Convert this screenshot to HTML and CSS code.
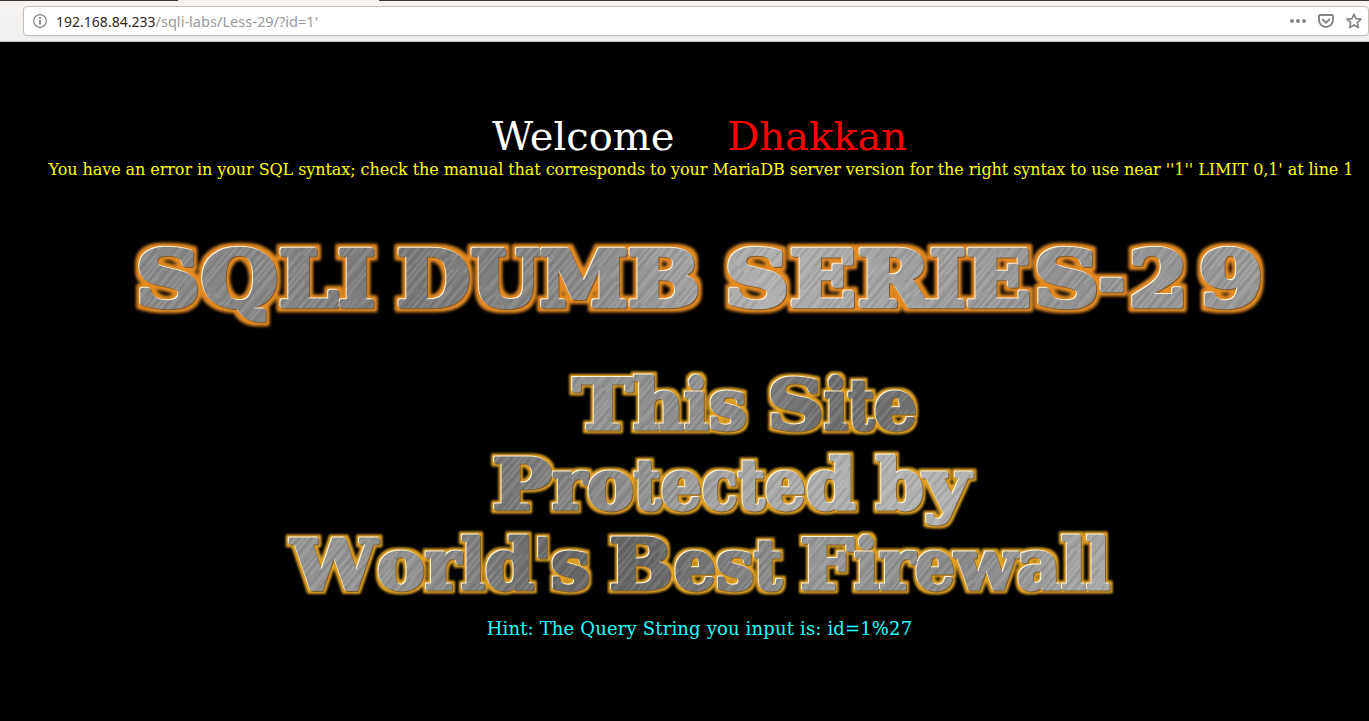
FILE: index.html
```html
<!DOCTYPE html>
<html lang="en">
<head>
<meta charset="utf-8">
<title>Less-29</title>
<link rel="stylesheet" href="styles.css">
</head>
<body>
<header class="toolbar">
  <div class="urlbar">
    <svg class="info" width="16" height="16" viewBox="0 0 16 16"><circle cx="8" cy="8" r="6.4" fill="none" stroke="#858585" stroke-width="1.2"/><path d="M8 7v4.4M8 4.3v1.8" stroke="#777" stroke-width="1.7"/></svg>
    <svg class="url" width="300" height="28"><text y="20"><tspan class="host" x="0" textLength="99.5" lengthAdjust="spacingAndGlyphs">192.168.84.233</tspan><tspan class="path" x="99.5" textLength="162.5" lengthAdjust="spacingAndGlyphs">/sqli-labs/Less-29/?id=1'</tspan></text></svg>
    <div class="actions">
      <svg width="16" height="16" viewBox="0 0 16 16" fill="#858585"><circle cx="2" cy="8" r="2"/><circle cx="8" cy="8" r="2"/><circle cx="14" cy="8" r="2"/></svg>
      <svg width="16" height="16" viewBox="0 0 16 16" fill="none" stroke="#858585" stroke-width="1.9" stroke-linecap="round" stroke-linejoin="round"><path d="M2 2h12a1 1 0 0 1 1 1v4a7 7 0 0 1-14 0V3a1 1 0 0 1 1-1zM4.7 6.5L8 9.7l3.3-3.2"/></svg>
      <svg width="16" height="16" viewBox="0 0 16 16" fill="none" stroke="#858585" stroke-width="1.7" stroke-linejoin="round"><path d="M8 1.2l2 4.5 5 .5-3.7 3.4 1 5L8 12.1l-4.3 2.5 1-5L1 6.2l5-.5z"/></svg>
    </div>
  </div>
</header>
<main class="page">
  <h1 class="welcome">Welcome&nbsp;&nbsp;&nbsp;&nbsp;<span class="name">Dhakkan</span></h1>
  <p class="error">You have an error in your SQL syntax; check the manual that corresponds to your MariaDB server version for the right syntax to use near ''1'' LIMIT 0,1' at line 1</p>
  <svg class="banner" width="1369" height="410" viewBox="0 200 1369 410">
    <defs>
      <linearGradient id="shade" x1="0" x2="1">
        <stop offset="0" stop-color="#8d8b8c"/><stop offset=".2" stop-color="#858585"/><stop offset=".3" stop-color="#787878"/><stop offset=".42" stop-color="#888"/><stop offset=".56" stop-color="#b0b0b0"/><stop offset=".66" stop-color="#a0a0a0"/><stop offset=".78" stop-color="#929292"/><stop offset="1" stop-color="#9b9b9b"/>
      </linearGradient>
      <linearGradient id="shade-low" x1="0" x2="1">
        <stop offset="0" stop-color="#949494"/><stop offset=".3" stop-color="#929292"/><stop offset=".4" stop-color="#686868"/><stop offset=".47" stop-color="#646464"/><stop offset=".6" stop-color="#989898"/><stop offset=".7" stop-color="#888"/><stop offset=".8" stop-color="#a6a6a6"/><stop offset="1" stop-color="#aaa"/>
      </linearGradient>
      <linearGradient id="shade-this" x1="0" x2="1">
        <stop offset=".4" stop-color="#949494"/><stop offset=".52" stop-color="#8e8e8e"/><stop offset=".6" stop-color="#6d6d6d"/><stop offset="1" stop-color="#777"/>
      </linearGradient>
      <linearGradient id="shade-mid" x1="0" x2="1">
        <stop offset=".35" stop-color="#727272"/><stop offset=".43" stop-color="#858585"/><stop offset=".54" stop-color="#a6a6a6"/><stop offset=".65" stop-color="#b2b2b2"/><stop offset="1" stop-color="#999"/>
      </linearGradient>
      <pattern id="brush" width="29" height="90" patternUnits="userSpaceOnUse" patternTransform="rotate(40)">
        <g stroke-width=".6">
          <path d="M2 0v51M9 20v70M16 0v38M21 30v60M27 5v55" stroke="#fff" stroke-opacity=".34"/>
          <path d="M5 10v75M12 0v42M14 50v40M19 0v65M24 25v60" stroke="#222" stroke-opacity=".3"/>
          <path d="M7 0v90M17.5 40v50M22.5 0v44" stroke="#fff" stroke-opacity=".2"/>
        </g>
      </pattern>
      <pattern id="steel" width="1369" height="721" patternUnits="userSpaceOnUse">
        <rect width="1369" height="350" fill="url(#shade)"/>
        <rect y="350" width="1369" height="92" fill="url(#shade-this)"/>
        <rect y="442" width="1369" height="90" fill="url(#shade-mid)"/>
        <rect y="532" width="1369" height="189" fill="url(#shade-low)"/>
        <rect width="1369" height="721" fill="url(#brush)"/>
      </pattern>
      <filter id="glow-orange" filterUnits="userSpaceOnUse" x="100" y="200" width="1200" height="160" color-interpolation-filters="sRGB">
        <feMorphology in="SourceAlpha" operator="dilate" radius="4" result="fat"/>
        <feGaussianBlur in="fat" stdDeviation="1.6" result="soft"/>
        <feFlood flood-color="#e38a22"/><feComposite in2="soft" operator="in" result="glow"/>
        <feOffset in="SourceAlpha" dx="-.6" dy="-.6" result="up"/><feFlood flood-color="#fff4dc"/><feComposite in2="up" operator="in" result="light"/>
        <feOffset in="SourceAlpha" dx=".8" dy=".8" result="down"/><feFlood flood-color="#82592d"/><feComposite in2="down" operator="in" result="dark"/>
        <feMerge><feMergeNode in="glow"/><feMergeNode in="dark"/><feMergeNode in="light"/><feMergeNode in="SourceGraphic"/></feMerge>
      </filter>
      <filter id="glow-gold" filterUnits="userSpaceOnUse" x="250" y="350" width="900" height="260" color-interpolation-filters="sRGB">
        <feMorphology in="SourceAlpha" operator="dilate" radius="3" result="fat"/>
        <feGaussianBlur in="fat" stdDeviation="1.2" result="soft"/>
        <feFlood flood-color="#dda024"/><feComposite in2="soft" operator="in" result="glow"/>
        <feOffset in="SourceAlpha" dx="-.6" dy="-.6" result="up"/><feFlood flood-color="#fff4dc"/><feComposite in2="up" operator="in" result="light"/>
        <feOffset in="SourceAlpha" dx=".8" dy=".8" result="down"/><feFlood flood-color="#80602d"/><feComposite in2="down" operator="in" result="dark"/>
        <feMerge><feMergeNode in="glow"/><feMergeNode in="dark"/><feMergeNode in="light"/><feMergeNode in="SourceGraphic"/></feMerge>
      </filter>
    </defs>
    <g class="metal title" filter="url(#glow-orange)">
      <text y="305.5"><tspan x="136" textLength="64" lengthAdjust="spacingAndGlyphs">S</tspan><tspan x="201" textLength="77" lengthAdjust="spacingAndGlyphs">Q</tspan><tspan x="279" textLength="59" lengthAdjust="spacingAndGlyphs">L</tspan><tspan x="338" textLength="37" lengthAdjust="spacingAndGlyphs">I</tspan></text>
      <text y="305.5"><tspan x="397" textLength="73" lengthAdjust="spacingAndGlyphs">D</tspan><tspan x="471" textLength="69" lengthAdjust="spacingAndGlyphs">U</tspan><tspan x="540" textLength="88" lengthAdjust="spacingAndGlyphs">M</tspan><tspan x="628" textLength="72" lengthAdjust="spacingAndGlyphs">B</tspan></text>
      <text y="305.5"><tspan x="725" textLength="64" lengthAdjust="spacingAndGlyphs">S</tspan><tspan x="790" textLength="66" lengthAdjust="spacingAndGlyphs">E</tspan><tspan x="858" textLength="72" lengthAdjust="spacingAndGlyphs">R</tspan><tspan x="930" textLength="36" lengthAdjust="spacingAndGlyphs">I</tspan><tspan x="966" textLength="65" lengthAdjust="spacingAndGlyphs">E</tspan><tspan x="1034" textLength="65" lengthAdjust="spacingAndGlyphs">S</tspan><tspan x="1099" textLength="26" lengthAdjust="spacingAndGlyphs">-</tspan><tspan x="1129" textLength="59" lengthAdjust="spacingAndGlyphs">2</tspan><tspan x="1199" textLength="64" lengthAdjust="spacingAndGlyphs">9</tspan></text>
    </g>
    <g class="metal firewall" filter="url(#glow-gold)">
      <text y="429"><tspan x="573" textLength="60" lengthAdjust="spacingAndGlyphs">T</tspan><tspan x="633" textLength="51" lengthAdjust="spacingAndGlyphs">h</tspan><tspan x="684" textLength="25" lengthAdjust="spacingAndGlyphs">i</tspan><tspan x="709" textLength="38" lengthAdjust="spacingAndGlyphs">s</tspan></text>
      <text y="429"><tspan x="767" textLength="57" lengthAdjust="spacingAndGlyphs">S</tspan><tspan x="824" textLength="24" lengthAdjust="spacingAndGlyphs">i</tspan><tspan x="848" textLength="26" lengthAdjust="spacingAndGlyphs">t</tspan><tspan x="874" textLength="43" lengthAdjust="spacingAndGlyphs">e</tspan></text>
      <text y="509"><tspan x="492" textLength="60" lengthAdjust="spacingAndGlyphs">P</tspan><tspan x="552" textLength="35" lengthAdjust="spacingAndGlyphs">r</tspan><tspan x="587" textLength="47" lengthAdjust="spacingAndGlyphs">o</tspan><tspan x="634" textLength="27" lengthAdjust="spacingAndGlyphs">t</tspan><tspan x="661" textLength="41" lengthAdjust="spacingAndGlyphs">e</tspan><tspan x="702" textLength="36" lengthAdjust="spacingAndGlyphs">c</tspan><tspan x="738" textLength="27" lengthAdjust="spacingAndGlyphs">t</tspan><tspan x="765" textLength="41" lengthAdjust="spacingAndGlyphs">e</tspan><tspan x="806" textLength="50" lengthAdjust="spacingAndGlyphs">d</tspan></text>
      <text y="509"><tspan x="876" textLength="48" lengthAdjust="spacingAndGlyphs">b</tspan><tspan x="924" textLength="46" lengthAdjust="spacingAndGlyphs">y</tspan></text>
      <text y="589"><tspan x="291" textLength="86" lengthAdjust="spacingAndGlyphs">W</tspan><tspan x="377" textLength="48" lengthAdjust="spacingAndGlyphs">o</tspan><tspan x="425" textLength="36" lengthAdjust="spacingAndGlyphs">r</tspan><tspan x="461" textLength="24" lengthAdjust="spacingAndGlyphs">l</tspan><tspan x="485" textLength="49" lengthAdjust="spacingAndGlyphs">d</tspan><tspan x="534" textLength="17" lengthAdjust="spacingAndGlyphs">'</tspan><tspan x="551" textLength="39" lengthAdjust="spacingAndGlyphs">s</tspan></text>
      <text y="589"><tspan x="609" textLength="64" lengthAdjust="spacingAndGlyphs">B</tspan><tspan x="674" textLength="42" lengthAdjust="spacingAndGlyphs">e</tspan><tspan x="716" textLength="38" lengthAdjust="spacingAndGlyphs">s</tspan><tspan x="754" textLength="28" lengthAdjust="spacingAndGlyphs">t</tspan></text>
      <text y="589"><tspan x="800" textLength="54" lengthAdjust="spacingAndGlyphs">F</tspan><tspan x="854" textLength="25" lengthAdjust="spacingAndGlyphs">i</tspan><tspan x="879" textLength="36" lengthAdjust="spacingAndGlyphs">r</tspan><tspan x="915" textLength="40" lengthAdjust="spacingAndGlyphs">e</tspan><tspan x="955" textLength="62" lengthAdjust="spacingAndGlyphs">w</tspan><tspan x="1017" textLength="44" lengthAdjust="spacingAndGlyphs">a</tspan><tspan x="1061" textLength="25" lengthAdjust="spacingAndGlyphs">l</tspan><tspan x="1086" textLength="24" lengthAdjust="spacingAndGlyphs">l</tspan></text>
    </g>
  </svg>
  <p class="hint">Hint: The Query String you input is: id=1%27</p>
</main>
</body>
</html>
```
FILE: styles.css
```css
* { box-sizing: border-box; }
body { margin: 0; height: 721px; overflow: hidden; background: #000; font-family: "DejaVu Serif", serif; }
.toolbar { position: relative; height: 42px; padding: 6px 0 0 23px; background: linear-gradient(#f6f4f3, #efefee); border-bottom: 1px solid #c5c3c0; }
.toolbar::before { content: ""; position: absolute; inset: 0 0 auto; height: 1px; background: linear-gradient(90deg, #3c3835 178px, #f5f3f2 178px 379px, #3c3835 379px); }
.urlbar { display: flex; align-items: center; height: 30px; padding: 0 6px 0 8px; border: 1px solid #c5bfb9; border-radius: 4px; background: #fff; box-shadow: 0 1px 2px #0000000d; }
.info { margin-right: 8px; }
.url { font: 14.8px "Noto Sans", sans-serif; }
.host { fill: #292929; }
.path { fill: #999; }
.actions { display: flex; gap: 12px; margin-left: auto; }
.page { padding-top: 71px; }
.welcome, .error, .hint { margin: 0; padding-left: 30px; text-align: center; font-weight: normal; white-space: nowrap; }
.welcome { font-size: 40px; line-height: 47px; color: #fff; }
.name { margin-left: 2px; color: #f00; }
.error { padding-left: 33px; font-size: 16px; line-height: 19px; letter-spacing: -.071px; color: #ff0; }
.banner { display: block; margin-top: 21px; }
.metal { font-family: "DejaVu Serif", serif; font-weight: bold; fill: url(#steel); stroke: url(#steel); stroke-linejoin: round; }
.title { font-size: 77px; stroke-width: 4.5px; }
.firewall { font-size: 69px; stroke-width: 2.8px; }
.hint { margin-top: 8px; font-size: 18px; line-height: 21px; letter-spacing: .16px; color: #22ffff; }
```
